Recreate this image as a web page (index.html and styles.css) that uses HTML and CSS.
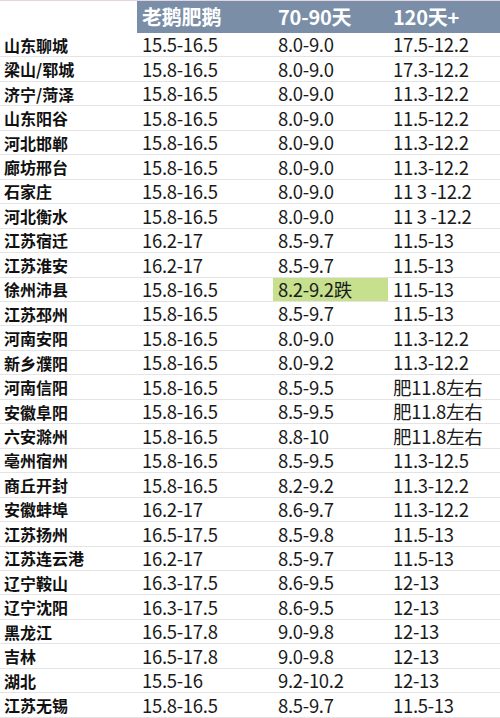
FILE: index.html
```html
<!DOCTYPE html>
<html lang="zh">
<head>
<meta charset="utf-8">
<link rel="stylesheet" href="styles.css">
</head>
<body>
<div class="sheet">
  <div class="row head">
    <div class="c blank"></div>
    <div class="c h">老鹅肥鹅</div>
    <div class="c h">70-90天</div>
    <div class="c h">120天+</div>
  </div>
  <div class="row"><div class="c n">山东聊城</div><div class="c">15.5-16.5</div><div class="c">8.0-9.0</div><div class="c">17.5-12.2</div></div>
  <div class="row"><div class="c n">梁山/郓城</div><div class="c">15.8-16.5</div><div class="c">8.0-9.0</div><div class="c">17.3-12.2</div></div>
  <div class="row"><div class="c n">济宁/菏泽</div><div class="c">15.8-16.5</div><div class="c">8.0-9.0</div><div class="c">11.3-12.2</div></div>
  <div class="row"><div class="c n">山东阳谷</div><div class="c">15.8-16.5</div><div class="c">8.0-9.0</div><div class="c">11.5-12.2</div></div>
  <div class="row"><div class="c n">河北邯郸</div><div class="c">15.8-16.5</div><div class="c">8.0-9.0</div><div class="c">11.3-12.2</div></div>
  <div class="row"><div class="c n">廊坊邢台</div><div class="c">15.8-16.5</div><div class="c">8.0-9.0</div><div class="c">11.3-12.2</div></div>
  <div class="row"><div class="c n">石家庄</div><div class="c">15.8-16.5</div><div class="c">8.0-9.0</div><div class="c">11 3 -12.2</div></div>
  <div class="row"><div class="c n">河北衡水</div><div class="c">15.8-16.5</div><div class="c">8.0-9.0</div><div class="c">11 3 -12.2</div></div>
  <div class="row"><div class="c n">江苏宿迁</div><div class="c">16.2-17</div><div class="c">8.5-9.7</div><div class="c">11.5-13</div></div>
  <div class="row"><div class="c n">江苏淮安</div><div class="c">16.2-17</div><div class="c">8.5-9.7</div><div class="c">11.5-13</div></div>
  <div class="row"><div class="c n">徐州沛县</div><div class="c">15.8-16.5</div><div class="c hl">8.2-9.2跌</div><div class="c">11.5-13</div></div>
  <div class="row"><div class="c n">江苏邳州</div><div class="c">15.8-16.5</div><div class="c">8.5-9.7</div><div class="c">11.5-13</div></div>
  <div class="row"><div class="c n">河南安阳</div><div class="c">15.8-16.5</div><div class="c">8.0-9.0</div><div class="c">11.3-12.2</div></div>
  <div class="row"><div class="c n">新乡濮阳</div><div class="c">15.8-16.5</div><div class="c">8.0-9.2</div><div class="c">11.3-12.2</div></div>
  <div class="row"><div class="c n">河南信阳</div><div class="c">15.8-16.5</div><div class="c">8.5-9.5</div><div class="c">肥11.8左右</div></div>
  <div class="row"><div class="c n">安徽阜阳</div><div class="c">15.8-16.5</div><div class="c">8.5-9.5</div><div class="c">肥11.8左右</div></div>
  <div class="row"><div class="c n">六安滁州</div><div class="c">15.8-16.5</div><div class="c">8.8-10</div><div class="c">肥11.8左右</div></div>
  <div class="row"><div class="c n">亳州宿州</div><div class="c">15.8-16.5</div><div class="c">8.5-9.5</div><div class="c">11.3-12.5</div></div>
  <div class="row"><div class="c n">商丘开封</div><div class="c">15.8-16.5</div><div class="c">8.2-9.2</div><div class="c">11.3-12.2</div></div>
  <div class="row"><div class="c n">安徽蚌埠</div><div class="c">16.2-17</div><div class="c">8.6-9.7</div><div class="c">11.3-12.2</div></div>
  <div class="row"><div class="c n">江苏扬州</div><div class="c">16.5-17.5</div><div class="c">8.5-9.8</div><div class="c">11.5-13</div></div>
  <div class="row"><div class="c n">江苏连云港</div><div class="c">16.2-17</div><div class="c">8.5-9.7</div><div class="c">11.5-13</div></div>
  <div class="row"><div class="c n">辽宁鞍山</div><div class="c">16.3-17.5</div><div class="c">8.6-9.5</div><div class="c">12-13</div></div>
  <div class="row"><div class="c n">辽宁沈阳</div><div class="c">16.3-17.5</div><div class="c">8.6-9.5</div><div class="c">12-13</div></div>
  <div class="row"><div class="c n">黑龙江</div><div class="c">16.5-17.8</div><div class="c">9.0-9.8</div><div class="c">12-13</div></div>
  <div class="row"><div class="c n">吉林</div><div class="c">16.5-17.8</div><div class="c">9.0-9.8</div><div class="c">12-13</div></div>
  <div class="row"><div class="c n">湖北</div><div class="c">15.5-16</div><div class="c">9.2-10.2</div><div class="c">12-13</div></div>
  <div class="row"><div class="c n">江苏无锡</div><div class="c">15.8-16.5</div><div class="c">8.5-9.7</div><div class="c">11.5-13</div></div>
</div>
</body>
</html>
```
FILE: styles.css
```css
html, body {
  margin: 0;
  padding: 0;
  background: #ffffff;
}
body {
  font-family: "Noto Sans CJK SC", "Noto Sans", sans-serif;
  color: #1a1a1a;
  width: 500px;
  height: 718px;
  overflow: hidden;
}
.sheet {
  border-top: 1px solid #e4d4e2;
}
.row {
  display: grid;
  grid-template-columns: 137px 136px 115px 112px;
  height: 24.46px;
  box-sizing: border-box;
  border-bottom: 1px solid #e4e4e4;
}
.row.head {
  height: 32px;
  border-bottom: none;
}
.c {
  display: flex;
  align-items: center;
  padding-left: 5px;
  font-size: 18.5px;
  letter-spacing: -0.3px;
  white-space: nowrap;
  line-height: 1;
}
.c.n {
  padding-left: 4px;
  font-size: 16px;
  font-weight: bold;
  letter-spacing: 0;
  color: #111111;
}
.c.h {
  background: #7a8ea8;
  color: #ffffff;
  font-size: 20px;
  font-weight: bold;
  letter-spacing: -0.2px;
  padding-left: 5px;
}
.c.blank {
  background: #ffffff;
}
.c.hl {
  background: #c6e08e;
}
```
